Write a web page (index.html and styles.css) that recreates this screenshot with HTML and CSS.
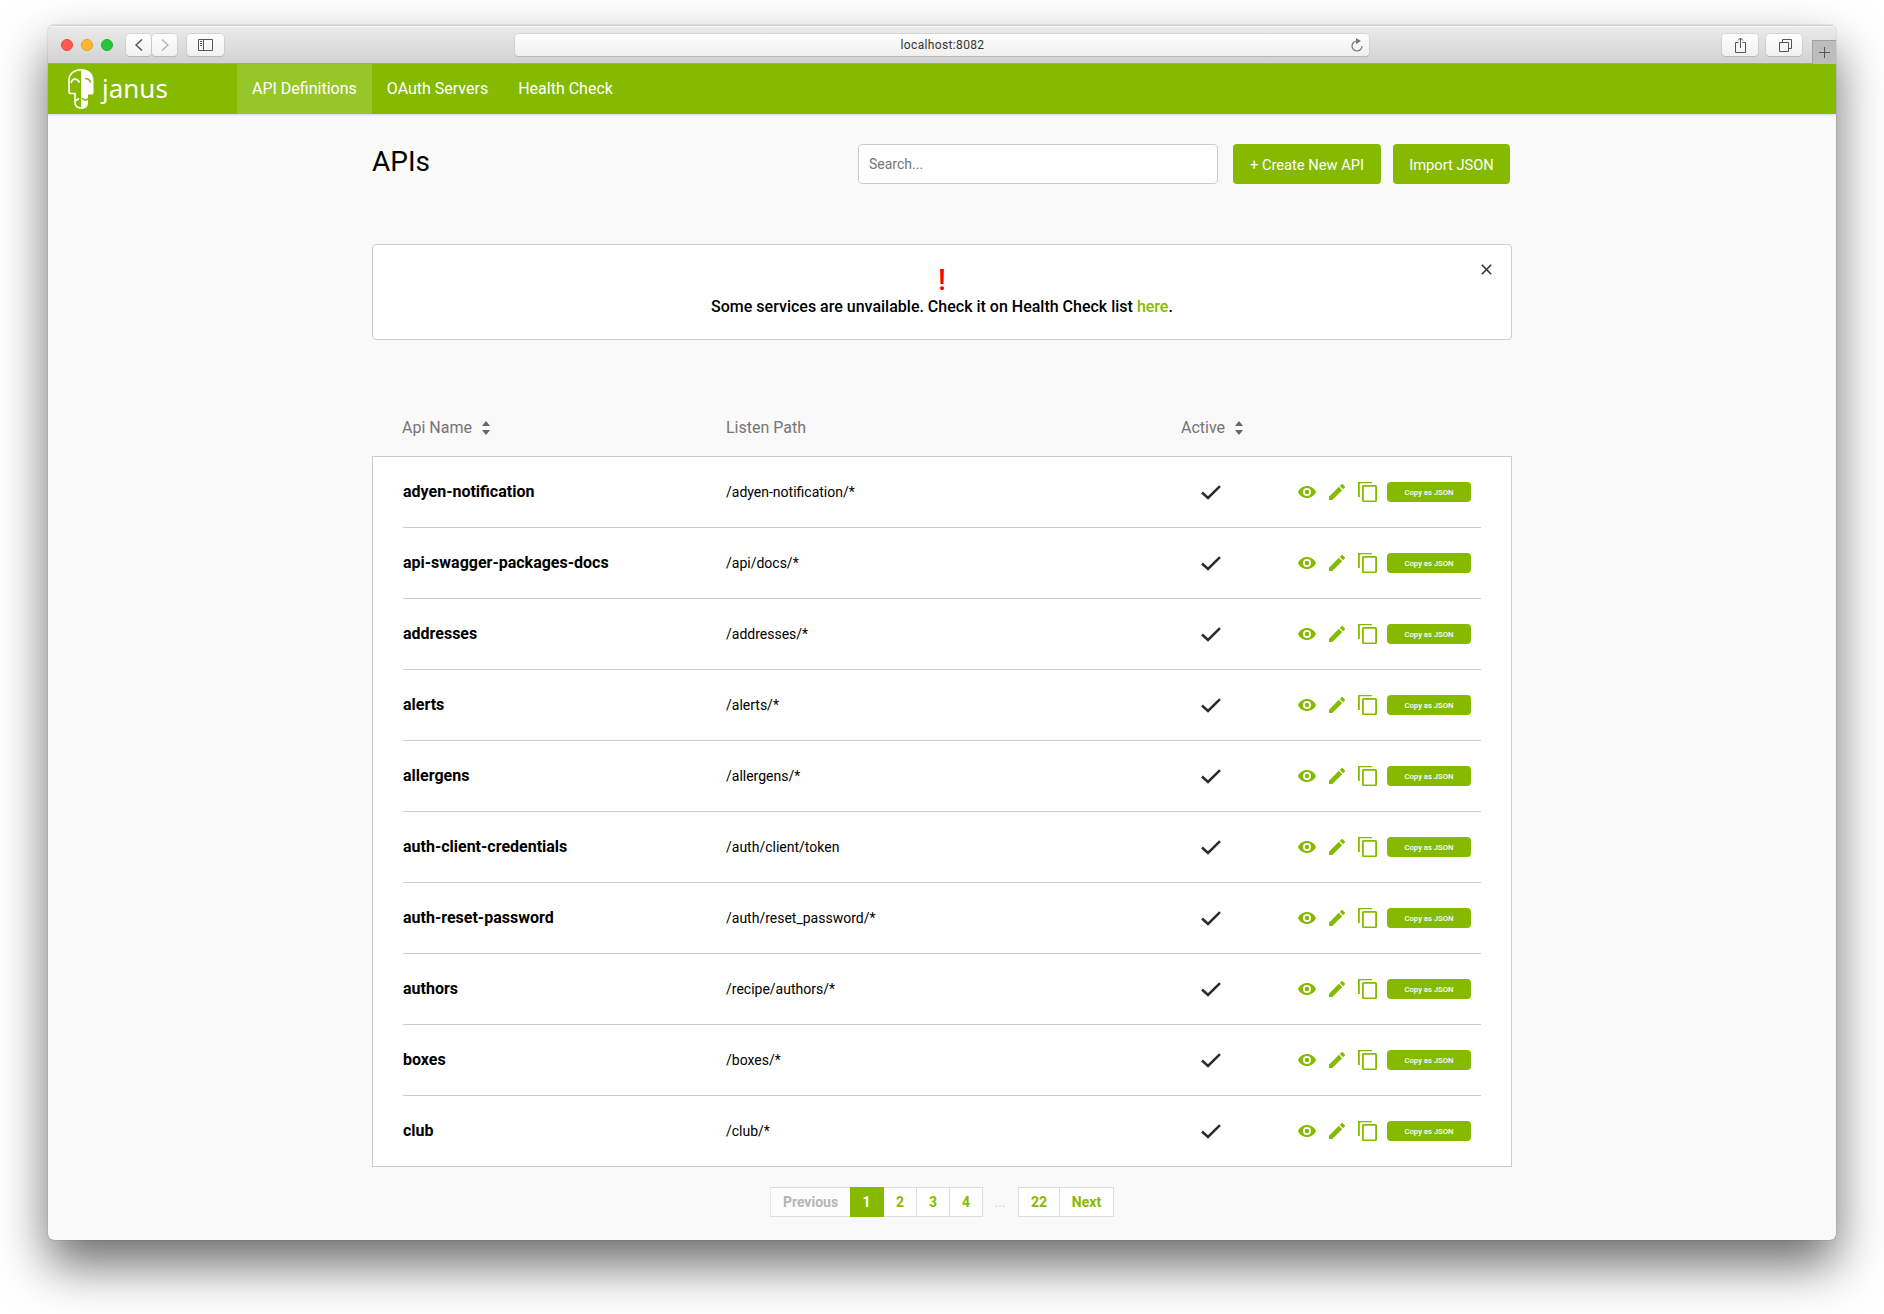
FILE: index.html
```html
<!DOCTYPE html>
<html lang="en">
<head>
<meta charset="utf-8">
<title>Janus</title>
<link rel="stylesheet" href="styles.css">
</head>
<body>
<svg class="sprite" width="0" height="0">
  <symbol id="eye" viewBox="0 0 18 12"><path fill-rule="evenodd" d="M9 0C5 0 1.500 2.400 0 6c1.500 3.600 5 6 9 6s7.500-2.400 9-6C16.500 2.400 13 0 9 0zm0 10a4 4 0 1 1 0-8 4 4 0 0 1 0 8zm0-1.800a2.200 2.200 0 1 0 0-4.400 2.200 2.200 0 0 0 0 4.400z"/></symbol>
  <symbol id="pencil" viewBox="3 3 18 18"><path d="M3 17.250V21h3.750L17.810 9.940l-3.750-3.750L3 17.250zM20.710 7.040a1 1 0 0 0 0-1.410l-2.340-2.340a1 1 0 0 0-1.410 0l-1.830 1.830 3.750 3.750 1.830-1.830z"/></symbol>
  <symbol id="copy" viewBox="0 0 19 20"><path d="M0 0h14v1.200H1.800V15H0z"/><path fill-rule="evenodd" d="M5.500 3h12A1.500 1.500 0 0 1 19 4.500v14a1.500 1.500 0 0 1-1.500 1.500h-12A1.500 1.500 0 0 1 4 18.500v-14A1.500 1.500 0 0 1 5.500 3zm.3 1.800v13.600h11.400V4.800z"/></symbol>
  <symbol id="check" viewBox="0 0 20 15"><path d="M1 7.500l6 5.500L19 1.200" fill="none" stroke="#2b2b2b" stroke-width="2.500"/></symbol>
  <symbol id="sort" viewBox="0 0 8 14"><path d="M0 5l4-5 4 5zM0 9h8l-4 5z"/></symbol>
</svg>
<div class="window">
  <div class="toolbar">
    <i class="dot red"></i><i class="dot amber"></i><i class="dot green"></i>
    <span class="tool back"><svg width="8" height="12" viewBox="0 0 8 12"><path d="M7 .5L1 6l6 5.500" fill="none" stroke="#555" stroke-width="1.500"/></svg></span>
    <span class="tool forward"><svg width="8" height="12" viewBox="0 0 8 12"><path d="M1 .5L7 6l-6 5.500" fill="none" stroke="#b5b5b5" stroke-width="1.500"/></svg></span>
    <span class="tool sidebar"><svg width="15" height="12" viewBox="0 0 15 12"><path d="M.5.5h14v11H.5zM5.500.5v11M2 2.500h2M2 4.500h2M2 6.500h2" fill="none" stroke="#555"/></svg></span>
    <div class="address"><span>localhost:8082</span><svg width="12" height="14" viewBox="0 0 12 14"><path d="M6 3A5 5 0 1 0 11 8" fill="none" stroke="#777" stroke-width="1.200"/><path d="M5 0l5 3-5 3z" fill="#777"/></svg></div>
    <span class="tool share"><svg width="11" height="16" viewBox="0 0 11 16"><path d="M3.500 5.500h-3v10h10v-10h-3M5.500 11V1M3 3.500L5.500 1 8 3.500" fill="none" stroke="#555"/></svg></span>
    <span class="tool tabs"><svg width="13" height="13" viewBox="0 0 13 13"><path d="M.5 3.500h9v9h-9zM3.500 3V.5h9v9H10" fill="none" stroke="#555"/></svg></span>
    <span class="newtab"><svg width="11" height="11" viewBox="0 0 11 11"><path d="M5.500 0v11M0 5.500h11" stroke="#555"/></svg></span>
  </div>
  <nav class="nav">
    <div class="logo">
      <svg width="26" height="40" viewBox="0 0 26 40"><path d="M13 .8C6 .8 1 5 1 11v12c0 1.200.5 1.500 2 1.500h4V33c0 4 2 6 6 6" fill="none" stroke="#fff" stroke-width="1.600"/><path d="M13 0c8 0 12.500 5 12.500 11v12.500c0 1.500-.5 2-2 2H20V34c0 3.500-2.500 6-7 6z" fill="#fff"/><path d="M3 14c1.500-5 6-5 8.500-.5M7 30.500c2 1.500 3 .5 3.500-1.500" fill="none" stroke="#fff" stroke-width="1.700"/><path d="M17 9.500c3 0 5 1.500 5.500 4M14 29c1.500 2 4 2.500 6 1" fill="none" stroke="#85ba00" stroke-width="1.600"/></svg>
      <span>janus</span>
    </div>
    <a class="active">API Definitions</a><a>OAuth Servers</a><a>Health Check</a>
  </nav>
  <main class="container">
    <div class="heading">
      <h1>APIs</h1>
      <input type="text" placeholder="Search...">
      <button class="create">+ Create New API</button>
      <button class="import">Import JSON</button>
    </div>
    <div class="alert">
      <b class="bang">!</b>
      <p>Some services are unvailable. Check it on Health Check list <a>here</a>.</p>
      <svg class="close" width="11" height="11" viewBox="0 0 11 11"><path d="M.8.8l9.400 9.400M10.200.8L.8 10.200" stroke="#333" stroke-width="1.600"/></svg>
    </div>
    <div class="row head">
      <span>Api Name <svg width="8" height="14"><use href="#sort"/></svg></span><span>Listen Path</span><span>Active <svg width="8" height="14"><use href="#sort"/></svg></span>
    </div>
    <div class="table" id="table"></div>
    <div class="pager">
      <span class="prev">Previous</span><span class="current">1</span><span>2</span><span>3</span><span>4</span><span class="gap">...</span><span class="last">22</span><span class="next">Next</span>
    </div>
  </main>
</div>
<script src="app.js"></script>
</body>
</html>
```
FILE: styles.css
```css
* { box-sizing: border-box; }
body { margin: 0; height: 1314px; overflow: hidden; background: #fff; font-family: Roboto, sans-serif; color: #000; }
.sprite { position: absolute; }
.window { width: 1788px; height: 1215px; margin: 25px 0 0 48px; background: #f9f9f9; border-radius: 6px; overflow: hidden; box-shadow: 0 0 1px rgba(0,0,0,.6), 0 25px 50px rgba(0,0,0,.58); }
.toolbar { height: 39px; display: flex; align-items: center; padding-left: 13px; padding-top: 1px; background: linear-gradient(#ebebeb, #d2d2d2); border-top: 1px solid #d0d0d0; border-bottom: 1px solid #a5a5a5; box-shadow: inset 0 1px #f6f6f6; }
.dot { width: 12px; height: 12px; border-radius: 50%; margin-right: 8px; border: 1px solid; }
.red { background: #ff5b52; border-color: #e5483f; }
.amber { background: #fdb72b; border-color: #e0a027; }
.green { background: #27c53a; border-color: #1fae30; }
.tool { height: 22px; display: flex; align-items: center; justify-content: center; border-radius: 4px; background: linear-gradient(#fefefe, #f1f1f1); box-shadow: 0 0 0 .5px #c4c4c4, 0 1px 1px #aaa; }
.back { width: 25px; margin-left: 5px; }
.forward { width: 25px; margin-left: 1px; }
.sidebar { width: 37px; margin-left: 10px; }
.address { width: 854px; height: 22px; margin-left: 291px; padding-right: 6px; display: flex; align-items: center; border-radius: 4px; background: linear-gradient(#fefefe, #efefef); box-shadow: 0 0 0 .5px #c4c4c4, 0 1px 1px #aaa; font-size: 12px; color: #333; }
.address span { flex: 1; text-align: center; padding-left: 19px; letter-spacing: .35px; }
.share { width: 36px; margin-left: 353px; }
.tabs { width: 36px; margin-left: 8px; }
.tabs svg { margin-left: 2px; }
.newtab { width: 24px; height: 24px; margin-left: auto; align-self: flex-end; margin-bottom: -1px; display: flex; align-items: center; justify-content: center; background: #bdbdbd; border: solid #a0a0a0; border-width: 1px 0 0 1px; }
.nav { height: 50px; display: flex; background: #85ba00; box-shadow: 0 1px 2px rgba(0,0,0,.15); color: #fff; font-size: 16px; }
.logo { width: 189px; display: flex; padding: 5px 0 0 20px; }
.logo span { font: 26px/38px "Noto Sans", sans-serif; margin-left: 8px; }
.nav a { padding: 0 15px; line-height: 49px; }
.nav .active { background: #97c628; }
.container { width: 1140px; margin: 0 auto; }
.heading { height: 130px; padding-top: 30px; display: flex; }
h1 { margin: 0; width: 486px; font-size: 28px; font-weight: 400; line-height: 36px; }
input { width: 360px; height: 40px; padding: 0 10px; border: 1px solid #ccc; border-radius: 4px; font: 14px Roboto; background: #fff; }
input::placeholder { color: #757575; }
button { border: 0; padding: 0; border-radius: 4px; background: #85ba00; color: #fff; font: 14.700px Roboto; height: 40px; }
.heading button { padding-top: 2px; }
.create { width: 148px; margin-left: 15px; }
.import { width: 117px; margin-left: 12px; }
.alert { position: relative; height: 96px; background: #fff; border: 1px solid #ccc; border-radius: 4px; text-align: center; padding-top: 18px; }
.bang { display: block; color: red; font: 500 30px/33px Roboto; }
.alert p { margin: 0; font-size: 16px; font-weight: 500; line-height: 22px; }
.alert a { color: #85ba00; }
.close { position: absolute; right: 19px; top: 19px; }
.row { display: grid; grid-template-columns: 323px 454px 118px 1fr; align-items: center; }
.head { height: 116px; padding: 59px 30px 0; grid-template-columns: 324px 455px 118px; font-size: 16px; color: #757575; }
.head svg { fill: #666; margin-left: 6px; vertical-align: -2px; }
.table { border: 1px solid #ccc; background: #fff; padding: 0 30px; }
.table .row { height: 71px; border-bottom: 1px solid #ccc; }
.table .row:last-child { height: 70px; border: 0; }
.name { font-size: 16px; font-weight: 700; padding-bottom: 2px; }
.path { font-size: 14px; padding-bottom: 1px; }
.check { width: 20px; height: 15px; margin-left: 20.500px; }
.actions { display: flex; align-items: center; fill: #85ba00; }
.eye { width: 18px; height: 12px; margin-bottom: 1px; }
.pencil { width: 16px; height: 16px; margin: 0 0 0 13px; }
.copy { width: 19px; height: 20px; margin: 0 10.500px 0 12.500px; }
.actions button { width: 84px; height: 20px; font-size: 7.700px; font-weight: 500; }
.pager { display: flex; justify-content: center; margin-top: 20px; font-size: 14px; font-weight: 700; color: #85ba00; }
.pager span { width: 33px; height: 30px; line-height: 28px; text-align: center; background: #fff; border: 1px solid #dcdee2; border-left: 0; }
.pager .prev { width: 80px; border-left: 1px solid #e8e8e8; border-right: 0; color: #b5b5b5; background: #fcfcfc; }
.pager .current { width: 34px; background: #85ba00; color: #fff; border-color: #85ba00; }
.pager .gap { width: 35px; background: none; border-color: transparent; color: #ccc; font-weight: 400; }
.pager .last { width: 42px; border-left: 1px solid #dcdee2; }
.pager .next { width: 54px; }
```
FILE: app.js
```js
const apis = [
  ["adyen-notification", "/adyen-notification/*"],
  ["api-swagger-packages-docs", "/api/docs/*"],
  ["addresses", "/addresses/*"],
  ["alerts", "/alerts/*"],
  ["allergens", "/allergens/*"],
  ["auth-client-credentials", "/auth/client/token"],
  ["auth-reset-password", "/auth/reset_password/*"],
  ["authors", "/recipe/authors/*"],
  ["boxes", "/boxes/*"],
  ["club", "/club/*"],
];
const icon = (name) => `<svg class="${name}"><use href="#${name}"/></svg>`;
document.getElementById("table").innerHTML = apis.map(([name, path]) => `
  <div class="row">
    <span class="name">${name}</span>
    <span class="path">${path}</span>
    ${icon("check")}
    <div class="actions">${icon("eye")}${icon("pencil")}${icon("copy")}<button>Copy as JSON</button></div>
  </div>`).join("");
```
